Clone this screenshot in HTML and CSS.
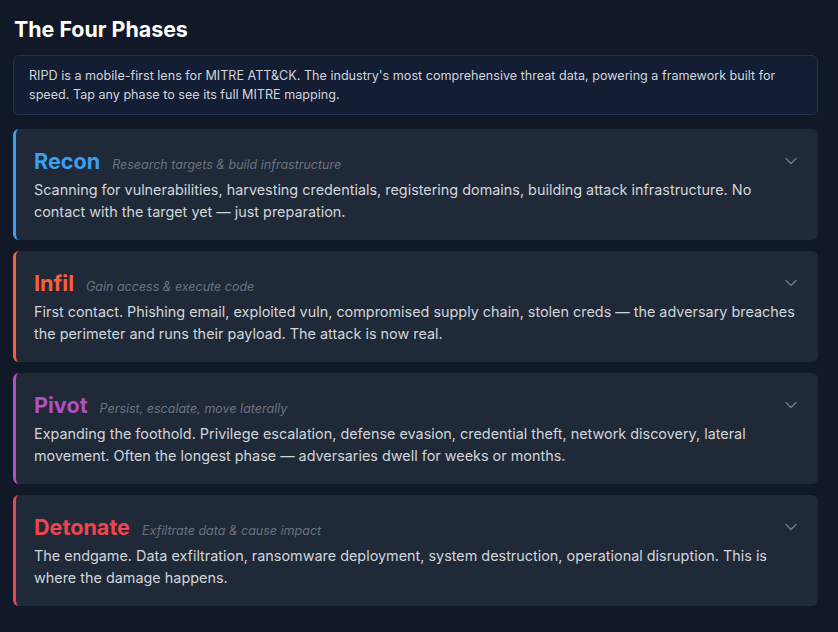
FILE: index.html
```html
<!DOCTYPE html>
<html lang="en">
<head>
<meta charset="utf-8">
<title>The Four Phases</title>
<link rel="stylesheet" href="styles.css">
</head>
<body>
<main class="page">
  <h1 class="title">The Four Phases</h1>
  <p class="intro">RIPD is a mobile-first lens for MITRE ATT&amp;CK. The industry's most comprehensive threat data, powering a framework built for speed. Tap any phase to see its full MITRE mapping.</p>
  <section class="phases">
    <article class="phase recon">
      <div class="phase-head">
        <h2 class="phase-name">Recon</h2>
        <span class="phase-tag">Research targets &amp; build infrastructure</span>
        <svg class="chev" viewBox="0 0 12 8" width="12" height="8"><path d="M1 1.5l5 5 5-5" fill="none" stroke="currentColor" stroke-width="1.6" stroke-linecap="round" stroke-linejoin="round"/></svg>
      </div>
      <p class="phase-desc">Scanning for vulnerabilities, harvesting credentials, registering domains, building attack infrastructure. No contact with the target yet — just preparation.</p>
    </article>
    <article class="phase infil">
      <div class="phase-head">
        <h2 class="phase-name">Infil</h2>
        <span class="phase-tag">Gain access &amp; execute code</span>
        <svg class="chev" viewBox="0 0 12 8" width="12" height="8"><path d="M1 1.5l5 5 5-5" fill="none" stroke="currentColor" stroke-width="1.6" stroke-linecap="round" stroke-linejoin="round"/></svg>
      </div>
      <p class="phase-desc">First contact. Phishing email, exploited vuln, compromised supply chain, stolen creds — the adversary breaches the perimeter and runs their payload. The attack is now real.</p>
    </article>
    <article class="phase pivot">
      <div class="phase-head">
        <h2 class="phase-name">Pivot</h2>
        <span class="phase-tag">Persist, escalate, move laterally</span>
        <svg class="chev" viewBox="0 0 12 8" width="12" height="8"><path d="M1 1.5l5 5 5-5" fill="none" stroke="currentColor" stroke-width="1.6" stroke-linecap="round" stroke-linejoin="round"/></svg>
      </div>
      <p class="phase-desc">Expanding the foothold. Privilege escalation, defense evasion, credential theft, network discovery, lateral movement. Often the longest phase — adversaries dwell for weeks or months.</p>
    </article>
    <article class="phase detonate">
      <div class="phase-head">
        <h2 class="phase-name">Detonate</h2>
        <span class="phase-tag">Exfiltrate data &amp; cause impact</span>
        <svg class="chev" viewBox="0 0 12 8" width="12" height="8"><path d="M1 1.5l5 5 5-5" fill="none" stroke="currentColor" stroke-width="1.6" stroke-linecap="round" stroke-linejoin="round"/></svg>
      </div>
      <p class="phase-desc">The endgame. Data exfiltration, ransomware deployment, system destruction, operational disruption. This is where the damage happens.</p>
    </article>
  </section>
</main>
</body>
</html>
```

FILE: styles.css
```css
* { box-sizing: border-box; }
html, body {
  margin: 0;
  background: #111827;
  color: #e5e7eb;
  font-family: Inter, "Noto Sans", "Liberation Sans", sans-serif;
}
.page {
  padding: 16px 20px 20px 13px;
}
.title {
  margin: 0 0 13px 1px;
  font-size: 21.4px;
  line-height: 26px;
  font-weight: 700;
  color: #ffffff;
}
.intro {
  margin: 0 0 14px 0;
  padding: 10px 15px 10px;
  background: #131d33;
  border: 1px solid #1e3454;
  border-radius: 6px;
  font-size: 12.6px;
  line-height: 19px;
  color: #d1d5db;
}
.phases {
  display: flex;
  flex-direction: column;
  gap: 11px;
}
.phase {
  background: #1f2937;
  border-radius: 6px;
  border-left: 3px solid;
  padding: 19px 18px 17px 18px;
}
.recon { border-left-color: #3b9ff0; }
.infil { border-left-color: #f7603f; }
.pivot { border-left-color: #b24fc2; }
.detonate { border-left-color: #ef4550; }
.phase-head {
  display: flex;
  align-items: baseline;
  gap: 12px;
}
.phase-name {
  margin: 0;
  font-size: 21.6px;
  line-height: 26px;
  font-weight: 700;
}
.recon .phase-name { color: #3b9ff0; }
.infil .phase-name { color: #f7603f; }
.pivot .phase-name { color: #b24fc2; }
.detonate .phase-name { color: #ef4550; }
.phase-tag {
  font-size: 12.5px;
  font-style: italic;
  color: #6b7280;
}
.chev {
  margin-left: auto;
  align-self: center;
  color: #6b7280;
  margin-right: 3px;
}
.phase-desc {
  margin: 5px 0 0;
  font-size: 14.4px;
  line-height: 22px;
  color: #d1d5db;
}
```
